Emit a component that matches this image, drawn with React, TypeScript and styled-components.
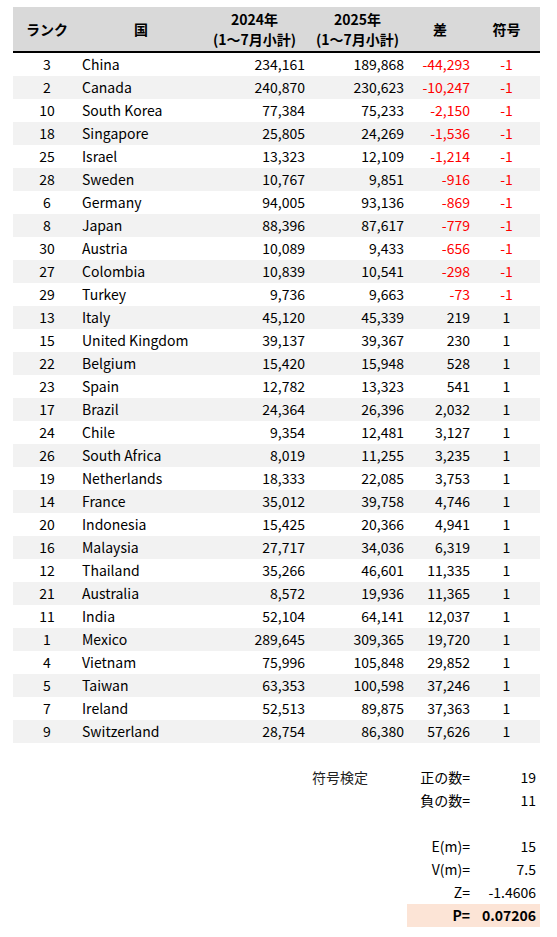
import React from 'react';
import styled, { createGlobalStyle } from 'styled-components';

const GlobalStyle = createGlobalStyle`
  body {
    margin: 0;
    background: #ffffff;
    font-family: "Noto Sans CJK JP", "Noto Sans", sans-serif;
    color: #000000;
  }
`;

const COLS = '68px 120px 107px 99px 66px 67px';

interface Row {
  rank: number;
  country: string;
  y2024: number;
  y2025: number;
  diff: number;
}

// diff comes from the sheet as-is (source values carry decimals)
const rows: Row[] = [
  { rank: 3, country: 'China', y2024: 234161, y2025: 189868, diff: -44293 },
  { rank: 2, country: 'Canada', y2024: 240870, y2025: 230623, diff: -10247 },
  { rank: 10, country: 'South Korea', y2024: 77384, y2025: 75233, diff: -2150 },
  { rank: 18, country: 'Singapore', y2024: 25805, y2025: 24269, diff: -1536 },
  { rank: 25, country: 'Israel', y2024: 13323, y2025: 12109, diff: -1214 },
  { rank: 28, country: 'Sweden', y2024: 10767, y2025: 9851, diff: -916 },
  { rank: 6, country: 'Germany', y2024: 94005, y2025: 93136, diff: -869 },
  { rank: 8, country: 'Japan', y2024: 88396, y2025: 87617, diff: -779 },
  { rank: 30, country: 'Austria', y2024: 10089, y2025: 9433, diff: -656 },
  { rank: 27, country: 'Colombia', y2024: 10839, y2025: 10541, diff: -298 },
  { rank: 29, country: 'Turkey', y2024: 9736, y2025: 9663, diff: -73 },
  { rank: 13, country: 'Italy', y2024: 45120, y2025: 45339, diff: 219 },
  { rank: 15, country: 'United Kingdom', y2024: 39137, y2025: 39367, diff: 230 },
  { rank: 22, country: 'Belgium', y2024: 15420, y2025: 15948, diff: 528 },
  { rank: 23, country: 'Spain', y2024: 12782, y2025: 13323, diff: 541 },
  { rank: 17, country: 'Brazil', y2024: 24364, y2025: 26396, diff: 2032 },
  { rank: 24, country: 'Chile', y2024: 9354, y2025: 12481, diff: 3127 },
  { rank: 26, country: 'South Africa', y2024: 8019, y2025: 11255, diff: 3235 },
  { rank: 19, country: 'Netherlands', y2024: 18333, y2025: 22085, diff: 3753 },
  { rank: 14, country: 'France', y2024: 35012, y2025: 39758, diff: 4746 },
  { rank: 20, country: 'Indonesia', y2024: 15425, y2025: 20366, diff: 4941 },
  { rank: 16, country: 'Malaysia', y2024: 27717, y2025: 34036, diff: 6319 },
  { rank: 12, country: 'Thailand', y2024: 35266, y2025: 46601, diff: 11335 },
  { rank: 21, country: 'Australia', y2024: 8572, y2025: 19936, diff: 11365 },
  { rank: 11, country: 'India', y2024: 52104, y2025: 64141, diff: 12037 },
  { rank: 1, country: 'Mexico', y2024: 289645, y2025: 309365, diff: 19720 },
  { rank: 4, country: 'Vietnam', y2024: 75996, y2025: 105848, diff: 29852 },
  { rank: 5, country: 'Taiwan', y2024: 63353, y2025: 100598, diff: 37246 },
  { rank: 7, country: 'Ireland', y2024: 52513, y2025: 89875, diff: 37363 },
  { rank: 9, country: 'Switzerland', y2024: 28754, y2025: 86380, diff: 57626 },
];

const fmt = (n: number) => n.toLocaleString('en-US');

const Sheet = styled.div`
  padding: 7px 0 0 13px;
  width: 527px;
  font-size: 14px;
`;

const HeaderRow = styled.div`
  display: grid;
  grid-template-columns: ${COLS};
  height: 44px;
  background: #d9d9d9;
  border-bottom: 2px solid #000000;
  font-weight: 700;
`;

const HeaderCell = styled.div`
  display: flex;
  flex-direction: column;
  align-items: center;
  justify-content: center;
  line-height: 20px;
  text-align: center;
`;

const DataRow = styled.div<{ $striped?: boolean }>`
  display: grid;
  grid-template-columns: ${COLS};
  height: 23px;
  line-height: 23px;
  background: ${(p) => (p.$striped ? '#f2f2f2' : '#ffffff')};
`;

const Cell = styled.div<{ $align?: 'left' | 'center' | 'right'; $neg?: boolean }>`
  text-align: ${(p) => p.$align ?? 'right'};
  padding: ${(p) =>
    p.$align === 'left' ? '0 0 0 1px' : p.$align === 'center' ? '0' : '0 3px 0 0'};
  color: ${(p) => (p.$neg ? '#ff0000' : '#000000')};
  white-space: nowrap;
`;

const Summary = styled.div`
  margin-top: 23px;
`;

const SummaryRow = styled.div<{ $highlight?: boolean }>`
  display: grid;
  grid-template-columns: ${COLS};
  height: 23px;
  line-height: 23px;
  font-weight: ${(p) => (p.$highlight ? 700 : 400)};
`;

const Title = styled.div`
  grid-column: 4;
  padding-left: 4px;
  color: #222222;
`;

const Label = styled.div<{ $highlight?: boolean }>`
  grid-column: 5;
  text-align: right;
  padding-right: 3px;
  background: ${(p) => (p.$highlight ? '#fce4d6' : 'transparent')};
`;

const Value = styled.div<{ $highlight?: boolean }>`
  grid-column: 6;
  text-align: right;
  padding-right: 4px;
  background: ${(p) => (p.$highlight ? '#fce4d6' : 'transparent')};
`;

const summary = [
  { title: '符号検定', label: '正の数=', value: '19' },
  { label: '負の数=', value: '11' },
  null,
  { label: 'E(m)=', value: '15' },
  { label: 'V(m)=', value: '7.5' },
  { label: 'Z=', value: '-1.4606' },
  { label: 'P=', value: '0.07206', highlight: true },
];

export default function App() {
  return (
    <>
      <GlobalStyle />
      <Sheet>
        <HeaderRow>
          <HeaderCell>ランク</HeaderCell>
          <HeaderCell>国</HeaderCell>
          <HeaderCell>
            <span>2024年</span>
            <span>(1～7月小計)</span>
          </HeaderCell>
          <HeaderCell>
            <span>2025年</span>
            <span>(1～7月小計)</span>
          </HeaderCell>
          <HeaderCell>差</HeaderCell>
          <HeaderCell>符号</HeaderCell>
        </HeaderRow>
        {rows.map((r, i) => {
          const neg = r.diff < 0;
          return (
            <DataRow key={r.country} $striped={i % 2 === 1}>
              <Cell $align="center">{r.rank}</Cell>
              <Cell $align="left">{r.country}</Cell>
              <Cell>{fmt(r.y2024)}</Cell>
              <Cell>{fmt(r.y2025)}</Cell>
              <Cell $neg={neg}>{fmt(r.diff)}</Cell>
              <Cell $align="center" $neg={neg}>
                {neg ? -1 : 1}
              </Cell>
            </DataRow>
          );
        })}
        <Summary>
          {summary.map((s, i) =>
            s ? (
              <SummaryRow key={i} $highlight={s.highlight}>
                {s.title && <Title>{s.title}</Title>}
                <Label $highlight={s.highlight}>{s.label}</Label>
                <Value $highlight={s.highlight}>{s.value}</Value>
              </SummaryRow>
            ) : (
              <SummaryRow key={i} />
            )
          )}
        </Summary>
      </Sheet>
    </>
  );
}
